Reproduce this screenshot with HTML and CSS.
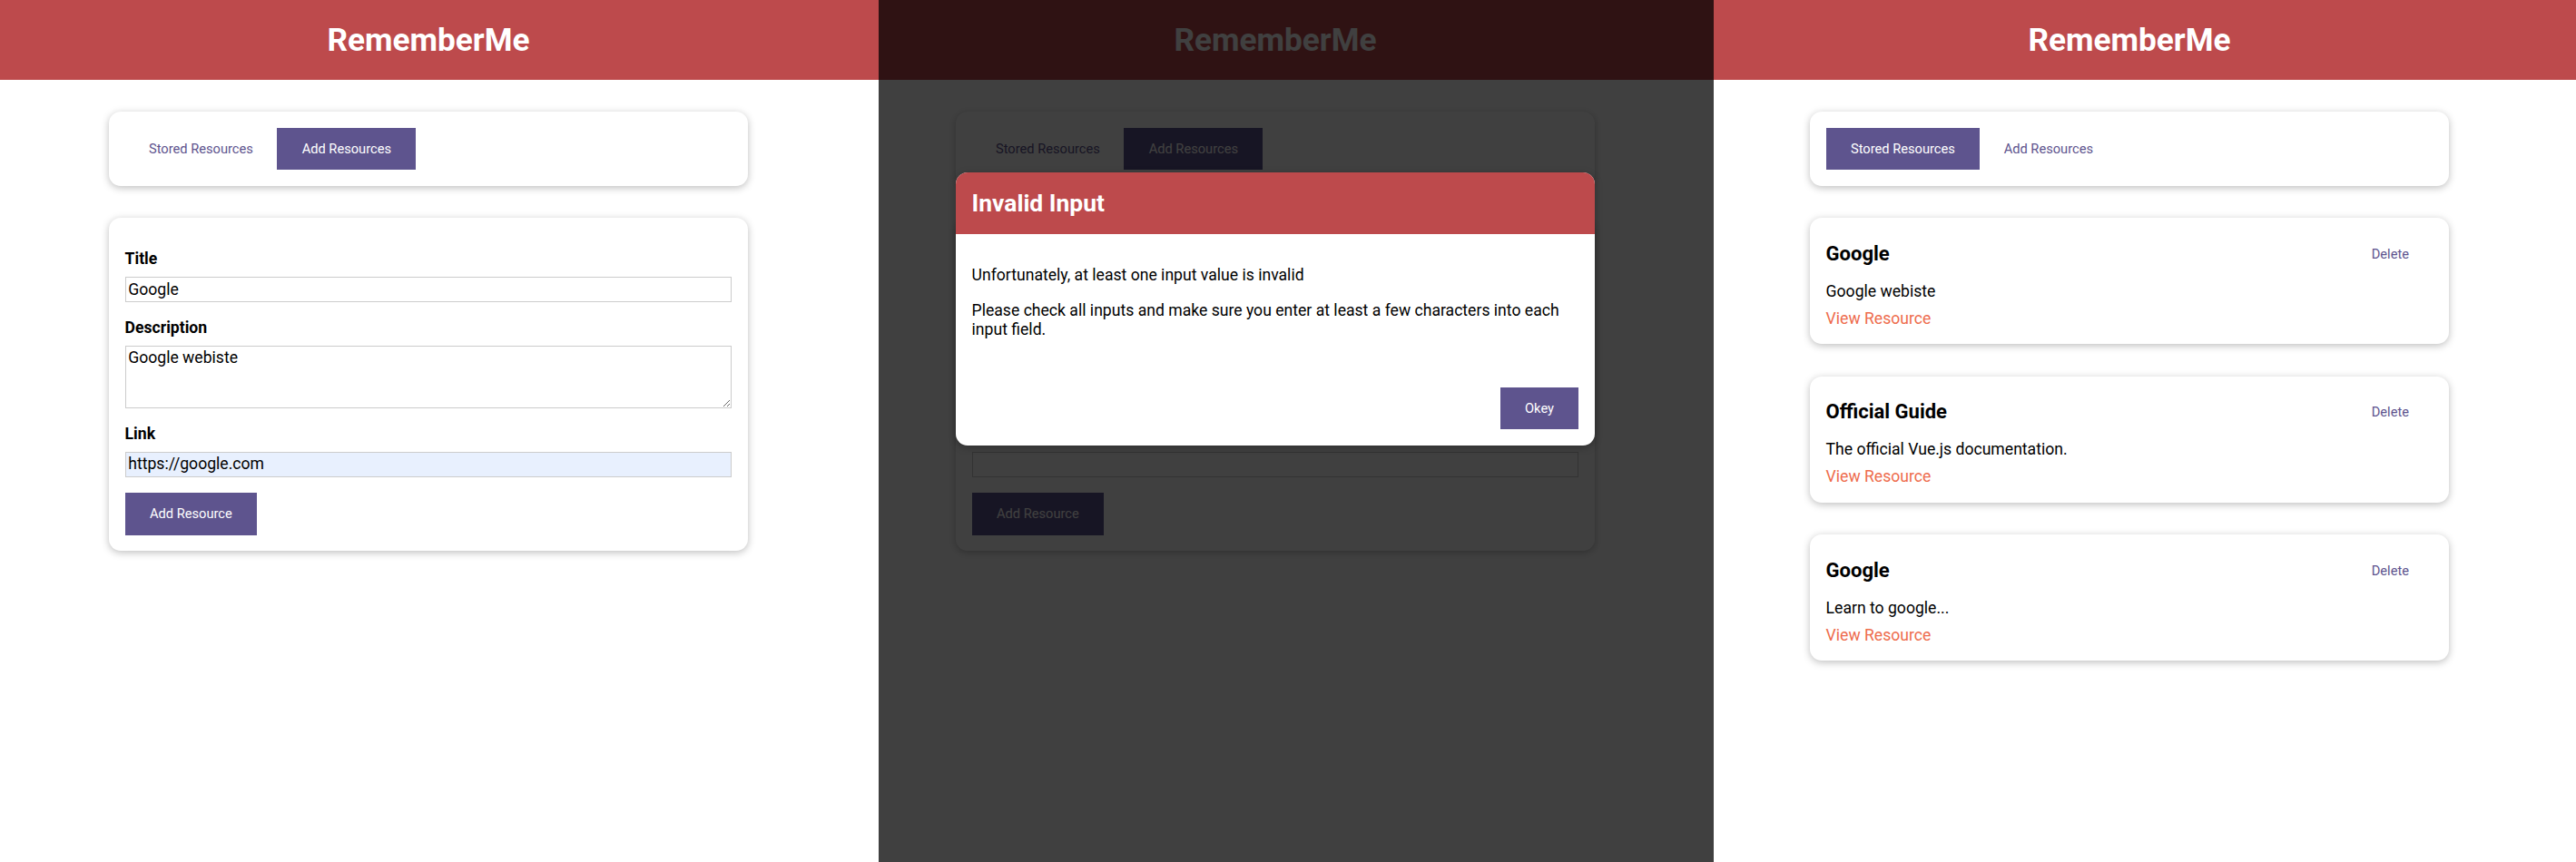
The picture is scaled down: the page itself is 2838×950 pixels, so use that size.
FILE: index.html
```html
<!DOCTYPE html>
<html lang="en">
<head>
<meta charset="utf-8">
<title>RememberMe</title>
<link rel="stylesheet" href="styles.css">
</head>
<body>
<div class="screens">

  <section class="screen screen--add">
    <header class="app-header"><h1>RememberMe</h1></header>
    <main class="app-main">
      <div class="card">
        <div class="tabs">
          <button class="btn btn--flat">Stored Resources</button>
          <button class="btn">Add Resources</button>
        </div>
      </div>
      <div class="card">
        <form class="resource-form">
          <div class="form-control">
            <label for="t1">Title</label>
            <input id="t1" type="text" value="Google">
          </div>
          <div class="form-control">
            <label for="d1">Description</label>
            <textarea id="d1" rows="3">Google webiste</textarea>
          </div>
          <div class="form-control">
            <label for="l1">Link</label>
            <input id="l1" class="input--autofill" type="url" value="https://google.com">
          </div>
          <div>
            <button type="button" class="btn">Add Resource</button>
          </div>
        </form>
      </div>
    </main>
  </section>

  <section class="screen screen--invalid">
    <header class="app-header"><h1>RememberMe</h1></header>
    <main class="app-main">
      <div class="card">
        <div class="tabs">
          <button class="btn btn--flat">Stored Resources</button>
          <button class="btn">Add Resources</button>
        </div>
      </div>
      <div class="card">
        <form class="resource-form">
          <div class="form-control">
            <label for="t2">Title</label>
            <input id="t2" type="text" value="">
          </div>
          <div class="form-control">
            <label for="d2">Description</label>
            <textarea id="d2" rows="3"></textarea>
          </div>
          <div class="form-control">
            <label for="l2">Link</label>
            <input id="l2" type="url" value="">
          </div>
          <div>
            <button type="button" class="btn">Add Resource</button>
          </div>
        </form>
      </div>
    </main>
    <div class="backdrop"></div>
    <div class="dialog" role="dialog">
      <header class="dialog__header"><h2>Invalid Input</h2></header>
      <div class="dialog__body">
        <p>Unfortunately, at least one input value is invalid</p>
        <p>Please check all inputs and make sure you enter at least a few characters into each input field.</p>
      </div>
      <menu class="dialog__actions">
        <button class="btn">Okey</button>
      </menu>
    </div>
  </section>

  <section class="screen screen--stored">
    <header class="app-header"><h1>RememberMe</h1></header>
    <main class="app-main">
      <div class="card">
        <div class="tabs">
          <button class="btn">Stored Resources</button>
          <button class="btn btn--flat">Add Resources</button>
        </div>
      </div>
      <ul class="resource-list">
        <li class="resource">
          <div class="card">
            <div class="resource__head">
              <h3>Google</h3>
              <button class="btn btn--flat">Delete</button>
            </div>
            <p class="resource__desc">Google webiste</p>
            <nav><a class="resource__link" href="#">View Resource</a></nav>
          </div>
        </li>
        <li class="resource">
          <div class="card">
            <div class="resource__head">
              <h3>Official Guide</h3>
              <button class="btn btn--flat">Delete</button>
            </div>
            <p class="resource__desc">The official Vue.js documentation.</p>
            <nav><a class="resource__link" href="#">View Resource</a></nav>
          </div>
        </li>
        <li class="resource">
          <div class="card">
            <div class="resource__head">
              <h3>Google</h3>
              <button class="btn btn--flat">Delete</button>
            </div>
            <p class="resource__desc">Learn to google...</p>
            <nav><a class="resource__link" href="#">View Resource</a></nav>
          </div>
        </li>
      </ul>
    </main>
  </section>

</div>
</body>
</html>
```

FILE: styles.css
```css
* {
  box-sizing: border-box;
}

html, body {
  margin: 0;
  padding: 0;
}

body {
  font-family: Roboto, "Liberation Sans", sans-serif;
  font-size: 17.6px;
  line-height: 1.2;
  color: #000;
  background: #fff;
}

.screens {
  display: flex;
  width: 2838px;
  height: 950px;
  overflow: hidden;
}

.screen {
  position: relative;
  flex: none;
  height: 950px;
  overflow: hidden;
  background: #fff;
}

.screen--add {
  width: 968px;
  --gutter: 24px;
}

.screen--invalid {
  width: 920px;
  --gutter: 46px;
}

.screen--stored {
  width: 950px;
  --gutter: 34px;
}

.app-header {
  height: 88px;
  background-color: #bd4a4c;
  display: flex;
  justify-content: center;
  align-items: center;
  padding-right: var(--gutter);
}

.app-header h1 {
  margin: 0;
  color: #fff;
  font-size: 35.2px;
  font-weight: 700;
  line-height: normal;
}

.app-main {
  padding-right: var(--gutter);
}

.card {
  border-radius: 13px;
  box-shadow: 0 2px 9px rgba(0, 0, 0, 0.26);
  padding: 17.6px;
  margin: 35.2px auto;
  max-width: 704px;
  background: #fff;
}

.tabs {
  display: flex;
}

.btn {
  padding: 13.2px 26.4px;
  font-family: inherit;
  font-size: 14.67px;
  line-height: normal;
  background-color: #5e548e;
  border: 1px solid #5e548e;
  color: #fff;
  cursor: pointer;
  margin: 0;
}

.btn--flat {
  background-color: transparent;
  border: none;
  color: #5e548e;
}

.resource-form {
  margin: 0;
}

.form-control {
  margin: 17.6px 0;
}

.form-control label {
  display: block;
  font-weight: 700;
  margin-bottom: 8.8px;
}

.form-control input,
.form-control textarea {
  display: block;
  width: 100%;
  font: inherit;
  line-height: 1.18;
  color: #000;
  padding: 2.64px;
  border: 1px solid #ccc;
  margin: 0;
  background-color: #fff;
}

.form-control input.input--autofill {
  background-color: #e8f0fe;
}

.backdrop {
  position: absolute;
  inset: 0;
  background-color: rgba(0, 0, 0, 0.75);
  z-index: 10;
}

.dialog {
  position: absolute;
  top: 190px;
  left: 85px;
  width: 704px;
  z-index: 20;
  border-radius: 13px;
  overflow: hidden;
  background: #fff;
  box-shadow: 0 2px 9px rgba(0, 0, 0, 0.26);
}

.dialog__header {
  background-color: #bd4a4c;
  color: #fff;
  padding: 17.6px;
}

.dialog__header h2 {
  margin: 0;
  font-size: 26.4px;
  font-weight: 700;
  line-height: 1.25;
}

.dialog__body {
  padding: 17.6px;
}

.dialog__body p {
  margin: 17.6px 0;
}

.dialog__actions {
  display: flex;
  justify-content: flex-end;
  margin: 0;
  padding: 17.6px;
}

.resource-list {
  list-style: none;
  margin: 0 auto;
  padding: 0;
  max-width: 704px;
}

.resource {
  margin: 0 auto;
  max-width: 704px;
}

.resource__head {
  display: flex;
  justify-content: space-between;
  align-items: center;
}

.resource__head h3 {
  font-size: 22px;
  font-weight: 700;
  margin: 8.8px 0;
}

.resource__desc {
  margin: 8.8px 0;
}

.resource__link {
  text-decoration: none;
  color: #ee6c4d;
}
```
